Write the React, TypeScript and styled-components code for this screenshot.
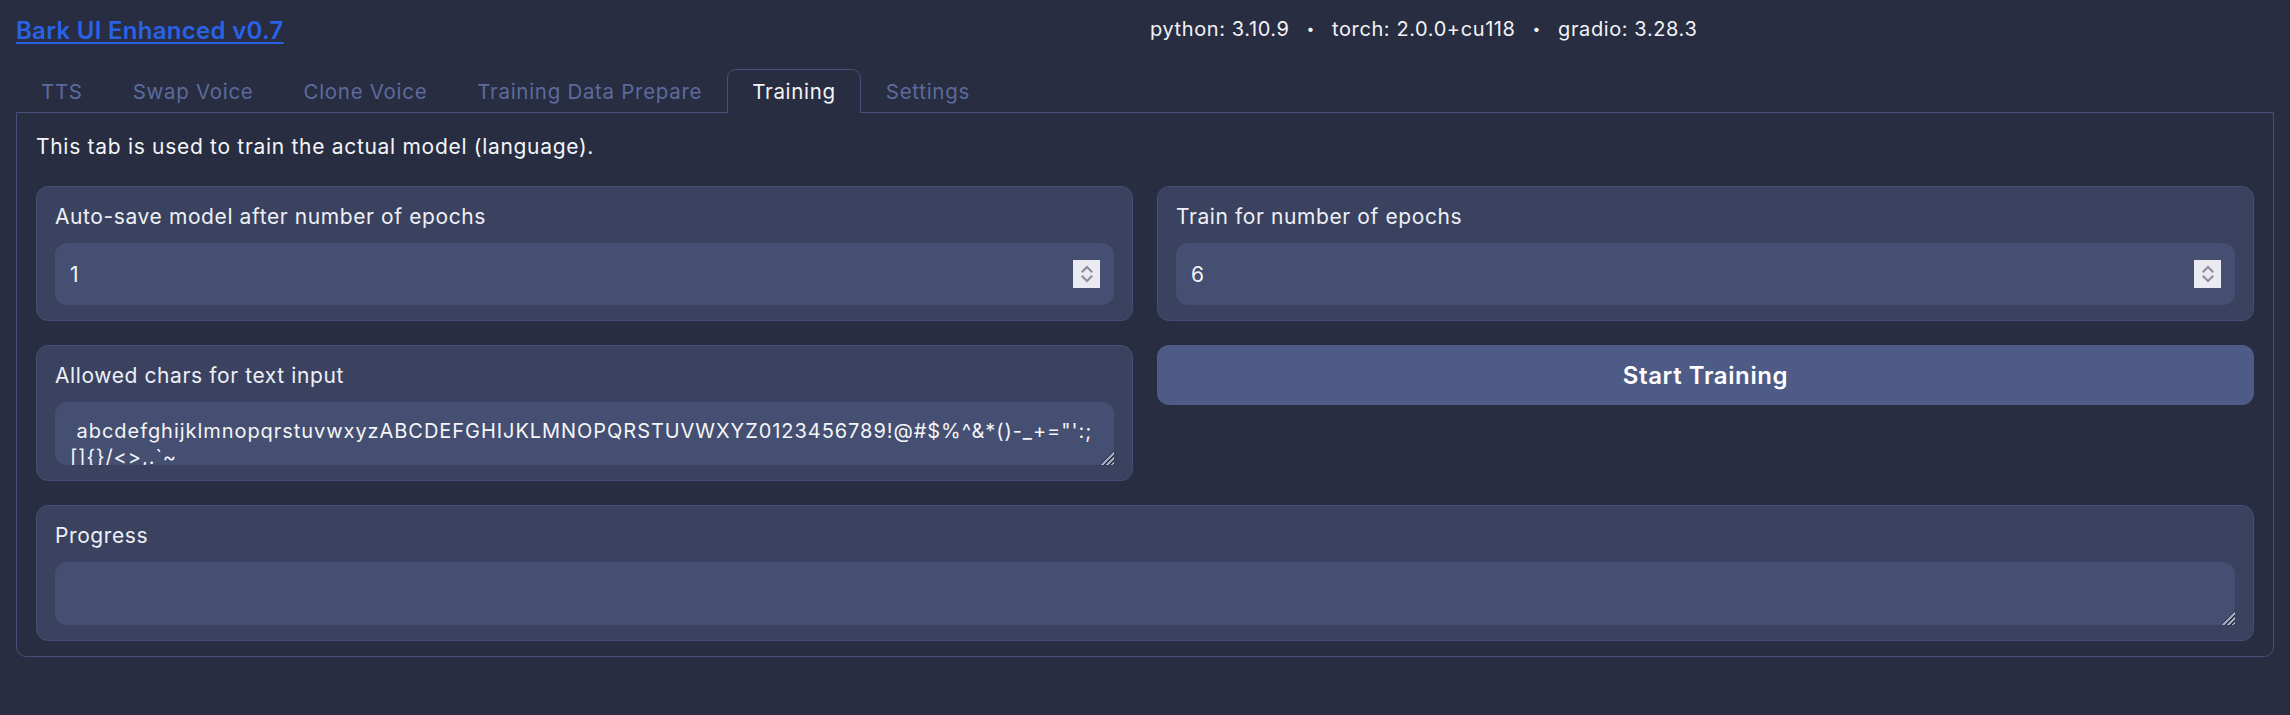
import React from "react";
import styled, { createGlobalStyle } from "styled-components";

const Global = createGlobalStyle`
  html, body {
    margin: 0;
    padding: 0;
    background: #282d42;
    min-height: 100%;
  }
  body {
    font-family: Inter, "Open Sans", "DejaVu Sans", sans-serif;
    color: #eef0f6;
  }
  * { box-sizing: border-box; }
`;

const Page = styled.div`
  width: 2290px;
  min-height: 715px;
  padding: 0 16px;
  background: #282d42;
`;

const Header = styled.header`
  display: grid;
  grid-template-columns: 1fr 1fr;
  column-gap: 10px;
  align-items: center;
  height: 60px;
`;

const Title = styled.a`
  font-size: 24px;
  font-weight: 600;
  color: #2962e6;
  text-decoration: underline;
  text-underline-offset: 3px;
  text-decoration-thickness: 2px;
  letter-spacing: 0.3px;
  justify-self: start;
`;

const Versions = styled.div`
  font-size: 20px;
  letter-spacing: 0.6px;
  color: #f2f3f7;
  display: flex;
  align-items: center;
  margin-top: -3px;
`;

const Dot = styled.span`
  margin: 0 17px;
  font-size: 14px;
`;

const TabBar = styled.nav`
  display: flex;
  gap: 0;
  margin-top: 9px;
  margin-bottom: -1px;
  position: relative;
  z-index: 1;
`;

const Tab = styled.button<{ $active?: boolean }>`
  height: 44px;
  padding: 0 24px;
  font-family: inherit;
  font-size: 20.5px;
  letter-spacing: 0.7px;
  background: ${(p) => (p.$active ? "#282d42" : "transparent")};
  color: ${(p) => (p.$active ? "#f4f5f8" : "#5c6a9c")};
  border: 1px solid ${(p) => (p.$active ? "#46507a" : "transparent")};
  border-bottom: none;
  border-radius: 9px 9px 0 0;
  cursor: pointer;
`;

const Panel = styled.section`
  border: 1px solid #46507a;
  border-radius: 0 0 10px 10px;
  padding: 19px 19px 15px;
  display: flex;
  flex-direction: column;
  gap: 24px;
`;

const Description = styled.p`
  margin: 0;
  font-size: 21px;
  letter-spacing: 0.7px;
  line-height: 30px;
  color: #f4f5f8;
`;

const Row = styled.div`
  display: grid;
  grid-template-columns: 1fr 1fr;
  gap: 24px;
  align-items: start;
`;

const Block = styled.div`
  background: #3a4260;
  border: 1px solid #454e74;
  border-radius: 12px;
  padding: 16px 18px 15px;
  display: flex;
  flex-direction: column;
  gap: 13px;
`;

const Label = styled.span`
  font-size: 21px;
  letter-spacing: 0.6px;
  line-height: 27px;
  color: #eef0f6;
`;

const NumberField = styled.div`
  height: 62px;
  border-radius: 12px;
  background: #454f72;
  display: flex;
  align-items: center;
  padding: 0 14px 0 15px;
`;

const NumberInput = styled.input`
  flex: 1;
  min-width: 0;
  background: transparent;
  border: none;
  outline: none;
  font-family: inherit;
  font-size: 21px;
  color: #f4f5f8;
  padding: 0;
`;

const Spinner = styled.div`
  width: 27px;
  height: 28px;
  background: #ebeaf0;
  display: flex;
  align-items: center;
  justify-content: center;
`;

const TextArea = styled.textarea<{ $h: number }>`
  height: ${(p) => p.$h}px;
  border-radius: 12px;
  background: #454f72;
  border: none;
  outline: none;
  resize: vertical;
  overflow: hidden;
  padding: 16px 15px 0;
  font-family: inherit;
  font-size: 20px;
  letter-spacing: 0.95px;
  line-height: 26px;
  color: #f4f5f8;
  word-break: break-all;

  &::-webkit-resizer {
    background:
      linear-gradient(to bottom right, #454f72 52%, transparent 52%),
      repeating-linear-gradient(135deg, #2b3147 0 1.6px, #a3a8bd 1.6px 3.4px);
  }
`;

const Button = styled.button`
  height: 60px;
  border: none;
  border-radius: 12px;
  background: #4e5b86;
  color: #ffffff;
  font-family: inherit;
  font-size: 24px;
  font-weight: 600;
  letter-spacing: 0.6px;
  cursor: pointer;
`;

const SpinIcon = () => (
  <svg width="14" height="20" viewBox="0 0 14 20" fill="none">
    <path d="M2.5 7.5 L7 3 L11.5 7.5" stroke="#8d8b98" strokeWidth="2" strokeLinecap="square" />
    <path d="M2.5 12.5 L7 17 L11.5 12.5" stroke="#8d8b98" strokeWidth="2" strokeLinecap="square" />
  </svg>
);

const NumberBox = ({ label, value }: { label: string; value: string }) => (
  <Block>
    <Label>{label}</Label>
    <NumberField>
      <NumberInput type="text" defaultValue={value} />
      <Spinner>
        <SpinIcon />
      </Spinner>
    </NumberField>
  </Block>
);

const allowed =
  " abcdefghijklmnopqrstuvwxyzABCDEFGHIJKLMNOPQRSTUVWXYZ0123456789!@#$%^&*()-_+=\"':;[]{}/<>,.`~";

const tabs = ["TTS", "Swap Voice", "Clone Voice", "Training Data Prepare", "Training", "Settings"];

export default function App() {
  return (
    <>
      <Global />
      <Page>
        <Header>
          <Title href="#">Bark UI Enhanced v0.7</Title>
          <Versions>
            <span>python: 3.10.9</span>
            <Dot>•</Dot>
            <span>torch: 2.0.0+cu118</span>
            <Dot>•</Dot>
            <span>gradio: 3.28.3</span>
          </Versions>
        </Header>
        <TabBar>
          {tabs.map((t) => (
            <Tab key={t} $active={t === "Training"}>
              {t}
            </Tab>
          ))}
        </TabBar>
        <Panel>
          <Description>This tab is used to train the actual model (language).</Description>
          <Row>
            <NumberBox label="Auto-save model after number of epochs" value="1" />
            <NumberBox label="Train for number of epochs" value="6" />
          </Row>
          <Row>
            <Block>
              <Label>Allowed chars for text input</Label>
              <TextArea $h={63} defaultValue={allowed} />
            </Block>
            <Button>Start Training</Button>
          </Row>
          <Block>
            <Label>Progress</Label>
            <TextArea $h={63} defaultValue="" />
          </Block>
        </Panel>
      </Page>
    </>
  );
}
